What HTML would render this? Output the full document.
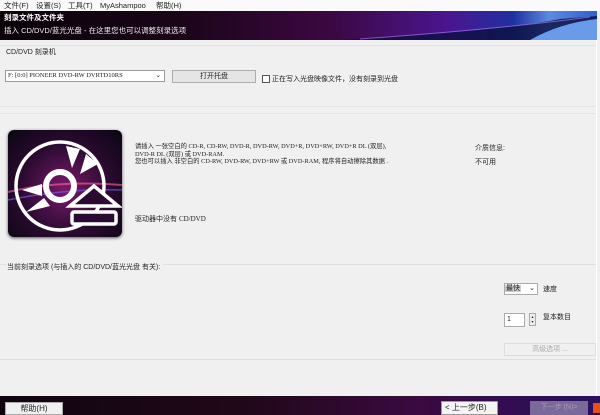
<!DOCTYPE html>
<html><head><meta charset="utf-8"><style>
*{margin:0;padding:0;box-sizing:border-box}
body{width:600px;height:415px;background:#f0f0f0;position:relative;overflow:hidden;font-family:"Liberation Sans","Noto Sans CJK SC",sans-serif;font-size:7px;color:#222}
.a{position:absolute;white-space:nowrap}
.mono{font-family:"Liberation Serif","Noto Sans CJK SC",serif}
</style></head><body>
<div class="a" style="left:0;top:0;width:600px;height:11px;background:#fafafa;font-size:7.5px;line-height:11px">
<span class="a" style="left:4px">文件(F)</span><span class="a" style="left:36px">设置(S)</span><span class="a" style="left:68px">工具(T)</span><span class="a" style="left:100px">MyAshampoo</span><span class="a" style="left:156px">帮助(H)</span></div>
<div class="a" style="left:0;top:11px;width:597px;height:29px;background:linear-gradient(90deg,#0a0208 0%,#1a0518 30%,#3b0840 55%,#4a1590 75%,#2030a0 86%,#5a8ae0 92%,#3060d0 100%)"></div>
<svg class="a" style="left:300px;top:11px" width="297" height="29"><path d="M40 29 Q200 20 260 8 L297 5 L297 29Z" fill="#0b1040" opacity=".8"/><path d="M60 28 Q200 18 290 6" stroke="#c080ff" stroke-width="1" fill="none" opacity=".6"/><path d="M230 29 Q260 12 297 8 L297 29Z" fill="#6a9aea"/></svg>
<div class="a" style="left:4px;top:12px;color:#fff;font-weight:bold;font-size:7.5px">刻录文件及文件夹</div>
<div class="a" style="left:4px;top:25px;color:#eee;font-size:7.5px">插入 CD/DVD/蓝光光盘 - 在这里您也可以调整刻录选项</div>
<div class="a" style="left:596px;top:40px;width:1px;height:356px;background:#fff"></div>
<div class="a" style="left:0;top:45px;width:596px;height:1px;background:#e2e2e2"></div>
<div class="a" style="left:6px;top:47px">CD/DVD 刻录机</div>
<div class="a mono" style="left:5px;top:70px;width:160px;height:12px;background:#fff;border:1px solid #9a9a9a;font-size:6.5px;line-height:10px;padding-left:2px">F: [0:0] PIONEER DVD-RW DVRTD10RS<span class="a" style="right:3px;top:0">⌄</span></div>
<div class="a" style="left:172px;top:70px;width:84px;height:13px;background:#e5e5e5;border:1px solid #adadad;text-align:center;line-height:11px">打开托盘</div>
<div class="a" style="left:262px;top:75px;width:8px;height:8px;background:#fff;border:1px solid #555"></div>
<div class="a" style="left:272px;top:74px">正在写入光盘映像文件，没有刻录到光盘</div>
<div class="a" style="left:0;top:106px;width:596px;height:1px;background:#e4e4e4"></div>
<div class="a" style="left:0;top:113px;width:596px;height:1px;background:#e4e4e4"></div>
<div class="a" style="left:8px;top:130px;width:114px;height:107px;border-radius:6px;background:radial-gradient(circle at 50% 55%,#7a1a6a,#2a0a30 55%,#0a0612);box-shadow:0 1px 3px #555"></div>
<svg class="a" style="left:8px;top:130px" width="114" height="107"><path d="M0 62 Q50 50 114 55" stroke="#ff60a0" stroke-width="2" fill="none" opacity=".6"/><path d="M0 70 Q60 58 114 60" stroke="#8060ff" stroke-width="1.5" fill="none" opacity=".6"/>
<circle cx="52" cy="56" r="44" fill="none" stroke="#fff" stroke-width="3.5"/><circle cx="52" cy="56" r="14" fill="none" stroke="#fff" stroke-width="6"/>
<path d="M58 16 L72 19 L64 38Z M78 24 L90 34 L72 44Z M14 60 L34 54 L34 66Z M18 82 L36 68 L42 76Z" fill="#fff"/>
<path d="M62 76 L86 56 L110 76Z" fill="#2a0a30" stroke="#fff" stroke-width="3.5"/><rect x="64" y="82" width="44" height="12" rx="2" fill="#2a0a30" stroke="#fff" stroke-width="3.5"/></svg>
<div class="a mono" style="left:135px;top:143px;font-size:6.3px;line-height:7.5px">请插入 一张空白的 CD-R, CD-RW, DVD-R, DVD-RW, DVD+R, DVD+RW, DVD+R DL (双层),<br>DVD-R DL (双层) 或 DVD-RAM.<br>您也可以插入 非空白的 CD-RW, DVD-RW, DVD+RW 或 DVD-RAM, 程序将自动擦除其数据 .</div>
<div class="a" style="left:475px;top:143px">介质信息:</div>
<div class="a" style="left:475px;top:157px">不可用</div>
<div class="a" style="left:135px;top:214px">驱动器中没有 <span class="mono">CD/DVD</span></div>
<div class="a" style="left:0;top:264px;width:596px;height:1px;background:#e0e0e0"></div>
<div class="a" style="left:7px;top:262px;background:#f0f0f0;padding-right:3px">当前刻录选项 (与插入的 CD/DVD/蓝光光盘 有关):</div>
<div class="a" style="left:0;top:359px;width:596px;height:1px;background:#e0e0e0"></div>
<div class="a" style="left:504px;top:283px;width:34px;height:12px;background:#fff;border:1px solid #aaa;line-height:10px"><span style="background:#ccc;padding:0 1px">最快</span><span class="a" style="right:2px;top:0">⌄</span></div>
<div class="a" style="left:543px;top:284px">速度</div>
<div class="a" style="left:504px;top:313px;width:21px;height:14px;background:#fff;border:1px solid #aaa;line-height:12px;padding-left:2px">1</div>
<div class="a" style="left:529px;top:313px;width:7px;height:13px;border:1px solid #aaa;background:#eee;font-size:4px;line-height:5px;text-align:center">▴<br>▾</div>
<div class="a" style="left:543px;top:312px">复本数目</div>
<div class="a" style="left:504px;top:343px;width:92px;height:13px;border:1px solid #ddd;color:#aaa;text-align:center;line-height:11px">高级选项 ...</div>
<div class="a" style="left:0;top:396px;width:600px;height:19px;background:linear-gradient(90deg,#100410 0%,#200818 40%,#3a0a40 70%,#2a1060 100%)"></div>
<div class="a" style="left:5px;top:402px;width:58px;height:13px;background:#f0f0f0;border:1px solid #aaa;text-align:center;line-height:12px;font-size:8px">帮助(H)</div>
<div class="a" style="left:441px;top:401px;width:57px;height:14px;background:#f4f4f4;border:1px solid #999;line-height:12px;font-size:8px;padding-left:3px">&lt; 上一步(B)</div>
<div class="a" style="left:530px;top:401px;width:58px;height:14px;background:#7a6a9a;color:#a898c0;text-align:center;line-height:13px;font-size:7px">下一步 (N)&gt;</div>
<div class="a" style="left:593px;top:403px;width:7px;height:10px;background:#e8501a"></div>
</body></html>
